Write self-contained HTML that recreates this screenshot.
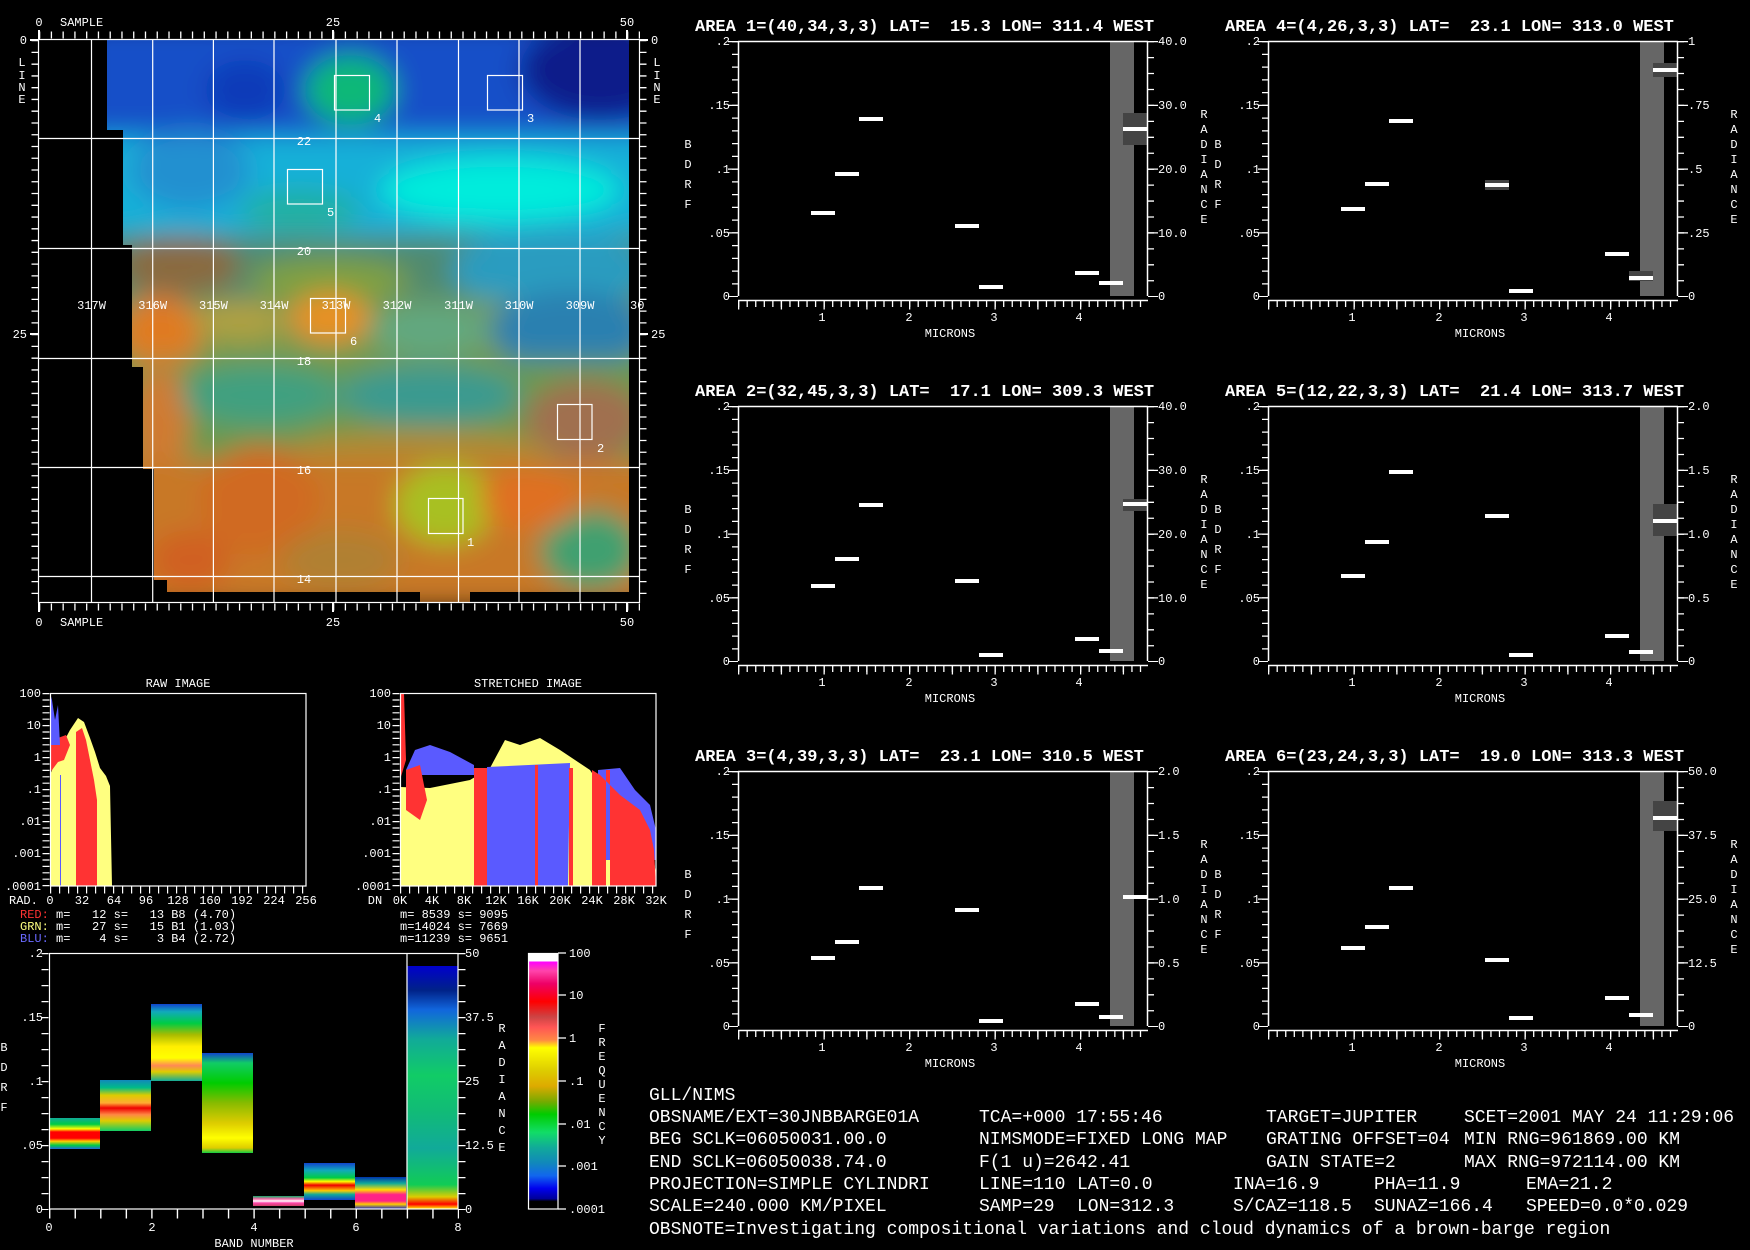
<!DOCTYPE html>
<html><head><meta charset="utf-8"><style>
html,body{margin:0;padding:0;background:#000;}
svg{display:block;}
text{font-family:"Liberation Mono",monospace;fill:#fff;}
.s{font-size:12px;}
.t{font-size:17px;font-weight:bold;white-space:pre;}
.b{font-size:18px;}
</style></head><body>
<svg width="1750" height="1250" viewBox="0 0 1750 1250" xmlns="http://www.w3.org/2000/svg">
<defs>
<filter id="bl" x="-20%" y="-20%" width="140%" height="140%"><feGaussianBlur stdDeviation="13"/></filter>
<clipPath id="mc"><polygon points="107,39 629,39 629,592 470,592 470,603 420,603 420,592 167,592 167,580 154,580 154,469 143,469 143,367 132,367 132,245 123,245 123,130 107,130"/></clipPath>
<g id="ax" stroke="#fff" fill="none">
<line x1="0" y1="0.5" x2="410" y2="0.5" stroke-width="1.5"/>
<line x1="0.5" y1="0" x2="0.5" y2="255" stroke-width="1.5"/>
<line x1="409.5" y1="0" x2="409.5" y2="255" stroke-width="1.5"/>
<line x1="-3" y1="0" x2="-3" y2="256" stroke-width="6" stroke-dasharray="1.3 11.45"/>
<line x1="-5" y1="0" x2="-5" y2="256" stroke-width="10" stroke-dasharray="1.3 62.45"/>
<line x1="413" y1="0" x2="413" y2="256" stroke-width="6" stroke-dasharray="1.3 14.64"/>
<line x1="415" y1="0" x2="415" y2="256" stroke-width="10" stroke-dasharray="1.3 62.45"/>
<line x1="0" y1="259.5" x2="410" y2="259.5" stroke-width="1.5"/>
<line x1="0" y1="263" x2="410" y2="263" stroke-width="6" stroke-dasharray="1.3 7.25"/>
<line x1="0" y1="264" x2="410" y2="264" stroke-width="9" stroke-dasharray="1.3 41.45"/>
</g>
<g id="lab" class="s">
<text x="-8" y="4" text-anchor="end">.2</text>
<text x="-8" y="68" text-anchor="end">.15</text>
<text x="-8" y="132" text-anchor="end">.1</text>
<text x="-8" y="196" text-anchor="end">.05</text>
<text x="-8" y="259" text-anchor="end">0</text>
<text x="84" y="280" text-anchor="middle">1</text>
<text x="171" y="280" text-anchor="middle">2</text>
<text x="256" y="280" text-anchor="middle">3</text>
<text x="341" y="280" text-anchor="middle">4</text>
<text x="212" y="296" text-anchor="middle">MICRONS</text>
<text x="-50" y="107" text-anchor="middle">B</text>
<text x="-50" y="127" text-anchor="middle">D</text>
<text x="-50" y="147" text-anchor="middle">R</text>
<text x="-50" y="167" text-anchor="middle">F</text>
<text x="466" y="77" text-anchor="middle">R</text>
<text x="466" y="92" text-anchor="middle">A</text>
<text x="466" y="107" text-anchor="middle">D</text>
<text x="466" y="122" text-anchor="middle">I</text>
<text x="466" y="137" text-anchor="middle">A</text>
<text x="466" y="152" text-anchor="middle">N</text>
<text x="466" y="167" text-anchor="middle">C</text>
<text x="466" y="182" text-anchor="middle">E</text>
</g>
<linearGradient id="cb" x1="0" y1="0" x2="0" y2="1">
<stop offset="0" stop-color="#fff"/><stop offset=".033" stop-color="#fff"/><stop offset=".034" stop-color="#f0f"/><stop offset=".07" stop-color="#f4a"/><stop offset=".12" stop-color="#e06"/><stop offset=".19" stop-color="#f00"/><stop offset=".25" stop-color="#c44"/><stop offset=".29" stop-color="#f55"/><stop offset=".34" stop-color="#f84"/><stop offset=".37" stop-color="#ff0"/><stop offset=".46" stop-color="#dc0"/><stop offset=".52" stop-color="#da0"/><stop offset=".58" stop-color="#7a0"/><stop offset=".63" stop-color="#0c0"/><stop offset=".70" stop-color="#1d6"/><stop offset=".76" stop-color="#1a9"/><stop offset=".82" stop-color="#18b"/><stop offset=".87" stop-color="#16e"/><stop offset=".92" stop-color="#00e"/><stop offset=".96" stop-color="#009"/><stop offset=".97" stop-color="#000"/><stop offset="1" stop-color="#000"/>
</linearGradient>
<linearGradient id="g0" x1="0" y1="0" x2="0" y2="1"><stop offset="0" stop-color="#1a9"/><stop offset=".2" stop-color="#0c4"/><stop offset=".35" stop-color="#ff0"/><stop offset=".45" stop-color="#f00"/><stop offset=".65" stop-color="#f00"/><stop offset=".75" stop-color="#fc0"/><stop offset=".88" stop-color="#0c4"/><stop offset="1" stop-color="#26d"/></linearGradient>
<linearGradient id="g1" x1="0" y1="0" x2="0" y2="1"><stop offset="0" stop-color="#18b"/><stop offset=".15" stop-color="#0b8"/><stop offset=".3" stop-color="#dc0"/><stop offset=".45" stop-color="#fa3"/><stop offset=".55" stop-color="#e00"/><stop offset=".68" stop-color="#f84"/><stop offset=".8" stop-color="#dc0"/><stop offset="1" stop-color="#1c6"/></linearGradient>
<linearGradient id="g2" x1="0" y1="0" x2="0" y2="1"><stop offset="0" stop-color="#14c"/><stop offset=".1" stop-color="#1ab"/><stop offset=".25" stop-color="#0c4"/><stop offset=".4" stop-color="#ab0"/><stop offset=".55" stop-color="#fe0"/><stop offset=".7" stop-color="#ff0"/><stop offset=".8" stop-color="#f85"/><stop offset=".88" stop-color="#dc0"/><stop offset="1" stop-color="#1a9"/></linearGradient>
<linearGradient id="g3" x1="0" y1="0" x2="0" y2="1"><stop offset="0" stop-color="#14c"/><stop offset=".1" stop-color="#1c6"/><stop offset=".3" stop-color="#0c0"/><stop offset=".5" stop-color="#8b0"/><stop offset=".7" stop-color="#dc0"/><stop offset=".85" stop-color="#ff0"/><stop offset=".95" stop-color="#dc0"/><stop offset="1" stop-color="#1c4"/></linearGradient>
<linearGradient id="g4" x1="0" y1="0" x2="0" y2="1"><stop offset="0" stop-color="#1a6"/><stop offset=".3" stop-color="#f6a"/><stop offset=".5" stop-color="#fff"/><stop offset=".7" stop-color="#f4a"/><stop offset="1" stop-color="#c46"/></linearGradient>
<linearGradient id="g5" x1="0" y1="0" x2="0" y2="1"><stop offset="0" stop-color="#14c"/><stop offset=".2" stop-color="#1ab"/><stop offset=".4" stop-color="#0c4"/><stop offset=".5" stop-color="#ff0"/><stop offset=".6" stop-color="#e00"/><stop offset=".75" stop-color="#fc0"/><stop offset=".85" stop-color="#1a9"/><stop offset="1" stop-color="#14c"/></linearGradient>
<linearGradient id="g6" x1="0" y1="0" x2="0" y2="1"><stop offset="0" stop-color="#03a"/><stop offset=".2" stop-color="#1a9"/><stop offset=".4" stop-color="#fd0"/><stop offset=".55" stop-color="#f28"/><stop offset=".75" stop-color="#f28"/><stop offset=".85" stop-color="#fc0"/><stop offset="1" stop-color="#12c"/></linearGradient>
<linearGradient id="g7" x1="0" y1="0" x2="0" y2="1"><stop offset="0" stop-color="#00c"/><stop offset=".1" stop-color="#028"/><stop offset=".18" stop-color="#16d"/><stop offset=".3" stop-color="#1a9"/><stop offset=".45" stop-color="#1c6"/><stop offset=".6" stop-color="#1b7"/><stop offset=".75" stop-color="#1a9"/><stop offset=".9" stop-color="#1c5"/><stop offset=".95" stop-color="#dc0"/><stop offset=".98" stop-color="#f00"/><stop offset="1" stop-color="#ff0"/></linearGradient>
</defs>

<!-- MAP -->
<g clip-path="url(#mc)">
<g filter="url(#bl)">
<rect x="80" y="20" width="580" height="120" fill="#1450c8"/>
<ellipse cx="600" cy="70" rx="80" ry="50" fill="#0a1e8a"/>
<ellipse cx="245" cy="90" rx="40" ry="30" fill="#0a3ab8"/>
<ellipse cx="350" cy="90" rx="45" ry="35" fill="#10b878"/>
<rect x="80" y="135" width="580" height="100" fill="#18b0d8"/>
<ellipse cx="500" cy="190" rx="120" ry="32" fill="#00ecdc"/>
<ellipse cx="190" cy="170" rx="60" ry="40" fill="#2090d0"/>
<ellipse cx="300" cy="210" rx="60" ry="20" fill="#20b0a0"/>
<rect x="80" y="235" width="580" height="70" fill="#508a70"/>
<ellipse cx="180" cy="265" rx="60" ry="30" fill="#8a6a40"/>
<ellipse cx="330" cy="280" rx="80" ry="22" fill="#80a040"/>
<ellipse cx="550" cy="270" rx="100" ry="40" fill="#2a9cc0"/>
<rect x="80" y="300" width="580" height="60" fill="#7a9a50"/>
<ellipse cx="160" cy="335" rx="40" ry="40" fill="#e07a20"/>
<ellipse cx="330" cy="318" rx="40" ry="25" fill="#e89020"/>
<ellipse cx="240" cy="320" rx="45" ry="20" fill="#b0a040"/>
<ellipse cx="430" cy="330" rx="60" ry="25" fill="#60a880"/>
<ellipse cx="570" cy="330" rx="80" ry="40" fill="#2a80b0"/>
<rect x="80" y="360" width="580" height="100" fill="#6a9a50"/>
<ellipse cx="160" cy="420" rx="30" ry="55" fill="#d07a30"/>
<ellipse cx="260" cy="395" rx="80" ry="30" fill="#40a080"/>
<ellipse cx="430" cy="395" rx="90" ry="30" fill="#3a9a90"/>
<ellipse cx="585" cy="420" rx="60" ry="40" fill="#a07050"/>
<ellipse cx="420" cy="450" rx="130" ry="20" fill="#b08a30"/>
<rect x="80" y="460" width="580" height="150" fill="#c87828"/>
<ellipse cx="445" cy="505" rx="50" ry="40" fill="#a8c020"/>
<ellipse cx="260" cy="500" rx="60" ry="55" fill="#d06a20"/>
<ellipse cx="590" cy="550" rx="50" ry="40" fill="#40a070"/>
<ellipse cx="190" cy="560" rx="40" ry="30" fill="#d06020"/>
<ellipse cx="530" cy="500" rx="50" ry="30" fill="#e07020"/>
<ellipse cx="340" cy="560" rx="60" ry="30" fill="#b08030"/>
</g></g>
<g stroke="#fff" stroke-width="1.2" fill="none">
<rect x="38.5" y="39.5" width="601" height="563"/>
<path d="M91.5 39V603M152.7 39V603M213.4 39V603M274 39V603M336 39V603M397 39V603M458.5 39V603M519 39V603M580 39V603"/>
<path d="M38 138.5H640M38 248.5H640M38 358.5H640M38 467.5H640M38 576.5H640"/>
<rect x="334.5" y="75.5" width="35" height="34.5"/>
<rect x="487.5" y="75.5" width="35" height="34.5"/>
<rect x="287.5" y="169.5" width="35" height="34.5"/>
<rect x="310.5" y="298.5" width="35" height="34.5"/>
<rect x="557.5" y="404.5" width="34.5" height="35"/>
<rect x="428.5" y="498.5" width="34.5" height="35"/>
<line x1="39" y1="35" x2="640" y2="35" stroke-width="7" stroke-dasharray="1.3 10.46"/>
<line x1="39" y1="607" x2="640" y2="607" stroke-width="7" stroke-dasharray="1.3 10.46"/>
<line x1="35" y1="40" x2="35" y2="603" stroke-width="7" stroke-dasharray="1.3 10.46"/>
<line x1="643" y1="40" x2="643" y2="603" stroke-width="7" stroke-dasharray="1.3 10.46"/>
<path d="M39 30V39M333 30V39M627 30V39M39 603V612M333 603V612M627 603V612" stroke-width="2"/>
<path d="M30 40H38M30 334H38M640 40H648M640 334H648" stroke-width="2"/>
</g>
<g class="s">
<text x="39" y="26" text-anchor="middle">0</text><text x="60" y="26">SAMPLE</text>
<text x="333" y="26" text-anchor="middle">25</text><text x="627" y="26" text-anchor="middle">50</text>
<text x="39" y="626" text-anchor="middle">0</text><text x="60" y="626">SAMPLE</text>
<text x="333" y="626" text-anchor="middle">25</text><text x="627" y="626" text-anchor="middle">50</text>
<text x="27" y="44" text-anchor="end">0</text><text x="27" y="338" text-anchor="end">25</text>
<text x="651" y="44">0</text><text x="651" y="338">25</text>
<text x="22" y="66" text-anchor="middle">L</text><text x="22" y="79" text-anchor="middle">I</text><text x="22" y="91" text-anchor="middle">N</text><text x="22" y="103" text-anchor="middle">E</text>
<text x="657" y="66" text-anchor="middle">L</text><text x="657" y="79" text-anchor="middle">I</text><text x="657" y="91" text-anchor="middle">N</text><text x="657" y="103" text-anchor="middle">E</text>
<text x="304" y="145" text-anchor="middle">22</text><text x="304" y="255" text-anchor="middle">20</text><text x="304" y="365" text-anchor="middle">18</text><text x="304" y="474" text-anchor="middle">16</text><text x="304" y="583" text-anchor="middle">14</text>
<text x="91.5" y="309" text-anchor="middle">317W</text><text x="152.7" y="309" text-anchor="middle">316W</text><text x="213.4" y="309" text-anchor="middle">315W</text><text x="274" y="309" text-anchor="middle">314W</text><text x="336" y="309" text-anchor="middle">313W</text><text x="397" y="309" text-anchor="middle">312W</text><text x="458.5" y="309" text-anchor="middle">311W</text><text x="519" y="309" text-anchor="middle">310W</text><text x="580" y="309" text-anchor="middle">309W</text><text x="630" y="309">30</text>
<text x="374" y="122">4</text><text x="527" y="122">3</text><text x="327" y="216">5</text><text x="350" y="345">6</text><text x="597" y="452">2</text><text x="467" y="546">1</text>
</g>

<!-- SPECTRAL PLOTS -->
<g transform="translate(738,41)">
<rect x="372" y="0" width="24" height="255" fill="#666"/><rect x="385" y="72" width="24" height="32" fill="#444"/>
<use href="#ax"/><use href="#lab"/>
<text class="t" x="-43" y="-10" xml:space="preserve">AREA 1=(40,34,3,3) LAT=  15.3 LON= 311.4 WEST</text>
<g class="s"><text x="420" y="4">40.0</text><text x="420" y="68">30.0</text><text x="420" y="132">20.0</text><text x="420" y="196">10.0</text><text x="420" y="259">0</text></g>
<g fill="#fff"><rect x="73" y="170" width="24" height="4"/><rect x="97" y="131" width="24" height="4"/><rect x="121" y="76" width="24" height="4"/><rect x="217" y="183" width="24" height="4"/><rect x="241" y="244" width="24" height="4"/><rect x="337" y="230" width="24" height="4"/><rect x="361" y="240" width="24" height="4"/><rect x="385" y="86" width="24" height="4"/></g>
</g>
<g transform="translate(738,406)">
<rect x="372" y="0" width="24" height="255" fill="#666"/><rect x="385" y="93" width="24" height="12" fill="#444"/>
<use href="#ax"/><use href="#lab"/>
<text class="t" x="-43" y="-10" xml:space="preserve">AREA 2=(32,45,3,3) LAT=  17.1 LON= 309.3 WEST</text>
<g class="s"><text x="420" y="4">40.0</text><text x="420" y="68">30.0</text><text x="420" y="132">20.0</text><text x="420" y="196">10.0</text><text x="420" y="259">0</text></g>
<g fill="#fff"><rect x="73" y="178" width="24" height="4"/><rect x="97" y="151" width="24" height="4"/><rect x="121" y="97" width="24" height="4"/><rect x="217" y="173" width="24" height="4"/><rect x="241" y="247" width="24" height="4"/><rect x="337" y="231" width="24" height="4"/><rect x="361" y="243" width="24" height="4"/><rect x="385" y="96" width="24" height="4"/></g>
</g>
<g transform="translate(738,771)">
<rect x="372" y="0" width="24" height="255" fill="#666"/>
<use href="#ax"/><use href="#lab"/>
<text class="t" x="-43" y="-10" xml:space="preserve">AREA 3=(4,39,3,3) LAT=  23.1 LON= 310.5 WEST</text>
<g class="s"><text x="420" y="4">2.0</text><text x="420" y="68">1.5</text><text x="420" y="132">1.0</text><text x="420" y="196">0.5</text><text x="420" y="259">0</text></g>
<g fill="#fff"><rect x="73" y="185" width="24" height="4"/><rect x="97" y="169" width="24" height="4"/><rect x="121" y="115" width="24" height="4"/><rect x="217" y="137" width="24" height="4"/><rect x="241" y="248" width="24" height="4"/><rect x="337" y="231" width="24" height="4"/><rect x="361" y="244" width="24" height="4"/><rect x="385" y="124" width="24" height="4"/></g>
</g>
<g transform="translate(1268,41)">
<rect x="372" y="0" width="24" height="255" fill="#666"/><rect x="385" y="22" width="24" height="14" fill="#444"/><rect x="361" y="230" width="24" height="10" fill="#444"/><rect x="217" y="139" width="24" height="10" fill="#444"/>
<use href="#ax"/><use href="#lab"/>
<text class="t" x="-43" y="-10" xml:space="preserve">AREA 4=(4,26,3,3) LAT=  23.1 LON= 313.0 WEST</text>
<g class="s"><text x="420" y="4">1</text><text x="420" y="68">.75</text><text x="420" y="132">.5</text><text x="420" y="196">.25</text><text x="420" y="259">0</text></g>
<g fill="#fff"><rect x="73" y="166" width="24" height="4"/><rect x="97" y="141" width="24" height="4"/><rect x="121" y="78" width="24" height="4"/><rect x="217" y="142" width="24" height="4"/><rect x="241" y="248" width="24" height="4"/><rect x="337" y="211" width="24" height="4"/><rect x="361" y="235" width="24" height="4"/><rect x="385" y="27" width="24" height="4"/></g>
</g>
<g transform="translate(1268,406)">
<rect x="372" y="0" width="24" height="255" fill="#666"/><rect x="385" y="98" width="24" height="32" fill="#444"/>
<use href="#ax"/><use href="#lab"/>
<text class="t" x="-43" y="-10" xml:space="preserve">AREA 5=(12,22,3,3) LAT=  21.4 LON= 313.7 WEST</text>
<g class="s"><text x="420" y="4">2.0</text><text x="420" y="68">1.5</text><text x="420" y="132">1.0</text><text x="420" y="196">0.5</text><text x="420" y="259">0</text></g>
<g fill="#fff"><rect x="73" y="168" width="24" height="4"/><rect x="97" y="134" width="24" height="4"/><rect x="121" y="64" width="24" height="4"/><rect x="217" y="108" width="24" height="4"/><rect x="241" y="247" width="24" height="4"/><rect x="337" y="228" width="24" height="4"/><rect x="361" y="244" width="24" height="4"/><rect x="385" y="113" width="24" height="4"/></g>
</g>
<g transform="translate(1268,771)">
<rect x="372" y="0" width="24" height="255" fill="#666"/><rect x="385" y="30" width="24" height="30" fill="#444"/>
<use href="#ax"/><use href="#lab"/>
<text class="t" x="-43" y="-10" xml:space="preserve">AREA 6=(23,24,3,3) LAT=  19.0 LON= 313.3 WEST</text>
<g class="s"><text x="420" y="4">50.0</text><text x="420" y="68">37.5</text><text x="420" y="132">25.0</text><text x="420" y="196">12.5</text><text x="420" y="259">0</text></g>
<g fill="#fff"><rect x="73" y="175" width="24" height="4"/><rect x="97" y="154" width="24" height="4"/><rect x="121" y="115" width="24" height="4"/><rect x="217" y="187" width="24" height="4"/><rect x="241" y="245" width="24" height="4"/><rect x="337" y="225" width="24" height="4"/><rect x="361" y="242" width="24" height="4"/><rect x="385" y="45" width="24" height="4"/></g>
</g>

<!-- HISTOGRAMS -->
<g class="s">
<text x="178" y="687" text-anchor="middle">RAW IMAGE</text>
<text x="528" y="687" text-anchor="middle">STRETCHED IMAGE</text>
</g>
<polygon fill="#ffff80" points="50,886 50,775 56,760 62,745 70,730 78,718 84,722 90,738 95,752 100,768 106,776 110,786 112,886"/>
<polygon fill="#ff3333" points="76,886 76,732 82,728 86,740 90,760 94,780 97,800 97,886"/>
<polygon fill="#ff3333" points="50,740 58,738 66,735 70,745 64,760 58,762 52,770 50,772"/>
<polygon fill="#5a5aff" points="50,693 52,700 55,720 58,705 60,745 50,745"/>
<rect x="60" y="775" width="1" height="111" fill="#5a5aff"/>
<polygon fill="#ffff80" points="400,886 400,787 430,788 470,780 490,768 505,740 520,745 540,738 560,750 575,760 590,770 600,785 620,800 640,815 650,840 656,873 656,886"/>
<polygon fill="#5a5aff" points="487,886 487,767 570,763 568,886"/>
<polygon fill="#5a5aff" points="406,770 415,750 430,745 450,752 474,765 474,775 406,775"/>
<polygon fill="#5a5aff" points="598,770 620,768 635,790 650,805 656,830 656,860 598,860"/>
<polygon fill="#ff3333" points="474,886 474,768 487,768 487,886"/>
<rect x="535" y="765" width="3" height="121" fill="#ff3333"/>
<rect x="569" y="768" width="4" height="118" fill="#ff3333"/>
<polygon fill="#ff3333" points="592,886 592,770 600,775 620,795 640,810 650,830 654,850 656,886 610,886 610,770 606,770 606,886"/>
<polygon fill="#ff3333" points="406,770 420,765 427,800 420,820 406,810"/>
<polygon fill="#ff3333" points="400,693 404,693 406,760 400,780"/>
<g stroke="#fff" fill="none" stroke-width="1.2">
<rect x="50.5" y="693.5" width="255.5" height="192.5"/>
<rect x="400.5" y="693.5" width="255.5" height="192.5"/>
<line x1="46" y1="693" x2="46" y2="887" stroke-width="7" stroke-dasharray="1.2 5.2"/>
<line x1="396" y1="693" x2="396" y2="887" stroke-width="7" stroke-dasharray="1.2 5.2"/>
<line x1="50" y1="890" x2="307" y2="890" stroke-width="7" stroke-dasharray="1.2 7.8"/>
<line x1="400" y1="890" x2="657" y2="890" stroke-width="7" stroke-dasharray="1.2 7.8"/>
</g>
<g class="s">
<text x="41" y="697" text-anchor="end">100</text><text x="41" y="729" text-anchor="end">10</text><text x="41" y="761" text-anchor="end">1</text><text x="41" y="793" text-anchor="end">.1</text><text x="41" y="825" text-anchor="end">.01</text><text x="41" y="857" text-anchor="end">.001</text><text x="41" y="890" text-anchor="end">.0001</text>
<text x="391" y="697" text-anchor="end">100</text><text x="391" y="729" text-anchor="end">10</text><text x="391" y="761" text-anchor="end">1</text><text x="391" y="793" text-anchor="end">.1</text><text x="391" y="825" text-anchor="end">.01</text><text x="391" y="857" text-anchor="end">.001</text><text x="391" y="890" text-anchor="end">.0001</text>
<text x="9" y="904">RAD.</text><text x="50" y="904" text-anchor="middle">0</text><text x="82" y="904" text-anchor="middle">32</text><text x="114" y="904" text-anchor="middle">64</text><text x="146" y="904" text-anchor="middle">96</text><text x="178" y="904" text-anchor="middle">128</text><text x="210" y="904" text-anchor="middle">160</text><text x="242" y="904" text-anchor="middle">192</text><text x="274" y="904" text-anchor="middle">224</text><text x="306" y="904" text-anchor="middle">256</text>
<text x="375" y="904" text-anchor="middle">DN</text><text x="400" y="904" text-anchor="middle">0K</text><text x="432" y="904" text-anchor="middle">4K</text><text x="464" y="904" text-anchor="middle">8K</text><text x="496" y="904" text-anchor="middle">12K</text><text x="528" y="904" text-anchor="middle">16K</text><text x="560" y="904" text-anchor="middle">20K</text><text x="592" y="904" text-anchor="middle">24K</text><text x="624" y="904" text-anchor="middle">28K</text><text x="656" y="904" text-anchor="middle">32K</text>
<text x="20" y="918" xml:space="preserve"><tspan style="fill:#ff3333">RED:</tspan> m=   12 s=   13 B8 (4.70)</text>
<text x="20" y="930" xml:space="preserve"><tspan style="fill:#ffff80">GRN:</tspan> m=   27 s=   15 B1 (1.03)</text>
<text x="20" y="942" xml:space="preserve"><tspan style="fill:#6a6aff">BLU:</tspan> m=    4 s=    3 B4 (2.72)</text>
<text x="400" y="918" xml:space="preserve">m= 8539 s= 9095</text>
<text x="400" y="930" xml:space="preserve">m=14024 s= 7669</text>
<text x="400" y="942" xml:space="preserve">m=11239 s= 9651</text>
</g>

<!-- BAND CHART -->
<rect x="49" y="1118" width="51" height="31" fill="url(#g0)"/>
<rect x="100" y="1080" width="51" height="51" fill="url(#g1)"/>
<rect x="151" y="1004" width="51" height="77" fill="url(#g2)"/>
<rect x="202" y="1053" width="51" height="100" fill="url(#g3)"/>
<rect x="253" y="1196" width="51" height="10" fill="url(#g4)"/>
<rect x="304" y="1163" width="51" height="37" fill="url(#g5)"/>
<rect x="355" y="1177" width="51" height="32" fill="url(#g6)"/>
<rect x="407" y="966" width="51" height="243" fill="url(#g7)"/>
<rect x="528" y="953" width="30" height="256" fill="url(#cb)"/>
<g stroke="#fff" fill="none" stroke-width="1.2">
<rect x="49.5" y="953.5" width="408.5" height="255.5"/>
<line x1="407" y1="953" x2="407" y2="1209"/>
<line x1="45" y1="953" x2="45" y2="1210" stroke-width="7" stroke-dasharray="1.2 14.8"/>
<line x1="462" y1="953" x2="462" y2="1210" stroke-width="7" stroke-dasharray="1.2 14.8"/>
<line x1="49" y1="1214" x2="459" y2="1214" stroke-width="9" stroke-dasharray="1.4 24.15"/>
<rect x="528.5" y="953.5" width="29.5" height="255.5"/>
<path d="M558 953H566M558 995H566M558 1038H566M558 1081H566M558 1124H566M558 1166H566M558 1209H566"/>
</g>
<g class="s">
<text x="43" y="957" text-anchor="end">.2</text><text x="43" y="1021" text-anchor="end">.15</text><text x="43" y="1085" text-anchor="end">.1</text><text x="43" y="1149" text-anchor="end">.05</text><text x="43" y="1213" text-anchor="end">0</text>
<text x="465" y="957">50</text><text x="465" y="1021">37.5</text><text x="465" y="1085">25</text><text x="465" y="1149">12.5</text><text x="465" y="1213">0</text>
<text x="49" y="1231" text-anchor="middle">0</text><text x="152" y="1231" text-anchor="middle">2</text><text x="254" y="1231" text-anchor="middle">4</text><text x="356" y="1231" text-anchor="middle">6</text><text x="458" y="1231" text-anchor="middle">8</text>
<text x="254" y="1247" text-anchor="middle">BAND NUMBER</text>
<text x="4" y="1051" text-anchor="middle">B</text><text x="4" y="1071" text-anchor="middle">D</text><text x="4" y="1091" text-anchor="middle">R</text><text x="4" y="1111" text-anchor="middle">F</text>
<text x="502" y="1032" text-anchor="middle">R</text><text x="502" y="1049" text-anchor="middle">A</text><text x="502" y="1066" text-anchor="middle">D</text><text x="502" y="1083" text-anchor="middle">I</text><text x="502" y="1100" text-anchor="middle">A</text><text x="502" y="1117" text-anchor="middle">N</text><text x="502" y="1134" text-anchor="middle">C</text><text x="502" y="1151" text-anchor="middle">E</text>
<text x="569" y="957">100</text><text x="569" y="999">10</text><text x="569" y="1042">1</text><text x="569" y="1085">.1</text><text x="569" y="1128">.01</text><text x="569" y="1170">.001</text><text x="569" y="1213">.0001</text>
<text x="602" y="1032" text-anchor="middle">F</text><text x="602" y="1046" text-anchor="middle">R</text><text x="602" y="1060" text-anchor="middle">E</text><text x="602" y="1074" text-anchor="middle">Q</text><text x="602" y="1088" text-anchor="middle">U</text><text x="602" y="1102" text-anchor="middle">E</text><text x="602" y="1116" text-anchor="middle">N</text><text x="602" y="1130" text-anchor="middle">C</text><text x="602" y="1144" text-anchor="middle">Y</text>
</g>

<!-- INFO TEXT -->
<g class="b" xml:space="preserve">
<text x="649" y="1100">GLL/NIMS</text>
<text x="649" y="1122">OBSNAME/EXT=30JNBBARGE01A</text><text x="979" y="1122">TCA=+000 17:55:46</text><text x="1266" y="1122">TARGET=JUPITER</text><text x="1464" y="1122">SCET=2001 MAY 24 11:29:06</text>
<text x="649" y="1144">BEG SCLK=06050031.00.0</text><text x="979" y="1144">NIMSMODE=FIXED LONG MAP</text><text x="1266" y="1144">GRATING OFFSET=04</text><text x="1464" y="1144">MIN RNG=961869.00 KM</text>
<text x="649" y="1167">END SCLK=06050038.74.0</text><text x="979" y="1167">F(1 u)=2642.41</text><text x="1266" y="1167">GAIN STATE=2</text><text x="1464" y="1167">MAX RNG=972114.00 KM</text>
<text x="649" y="1189">PROJECTION=SIMPLE CYLINDRI</text><text x="979" y="1189">LINE=110</text><text x="1077" y="1189">LAT=0.0</text><text x="1233" y="1189">INA=16.9</text><text x="1374" y="1189">PHA=11.9</text><text x="1526" y="1189">EMA=21.2</text>
<text x="649" y="1211">SCALE=240.000 KM/PIXEL</text><text x="979" y="1211">SAMP=29</text><text x="1077" y="1211">LON=312.3</text><text x="1233" y="1211">S/CAZ=118.5</text><text x="1374" y="1211">SUNAZ=166.4</text><text x="1526" y="1211">SPEED=0.0*0.029</text>
<text x="649" y="1234">OBSNOTE=Investigating compositional variations and cloud dynamics of a brown-barge region</text>
</g>
</svg>
</body></html>
